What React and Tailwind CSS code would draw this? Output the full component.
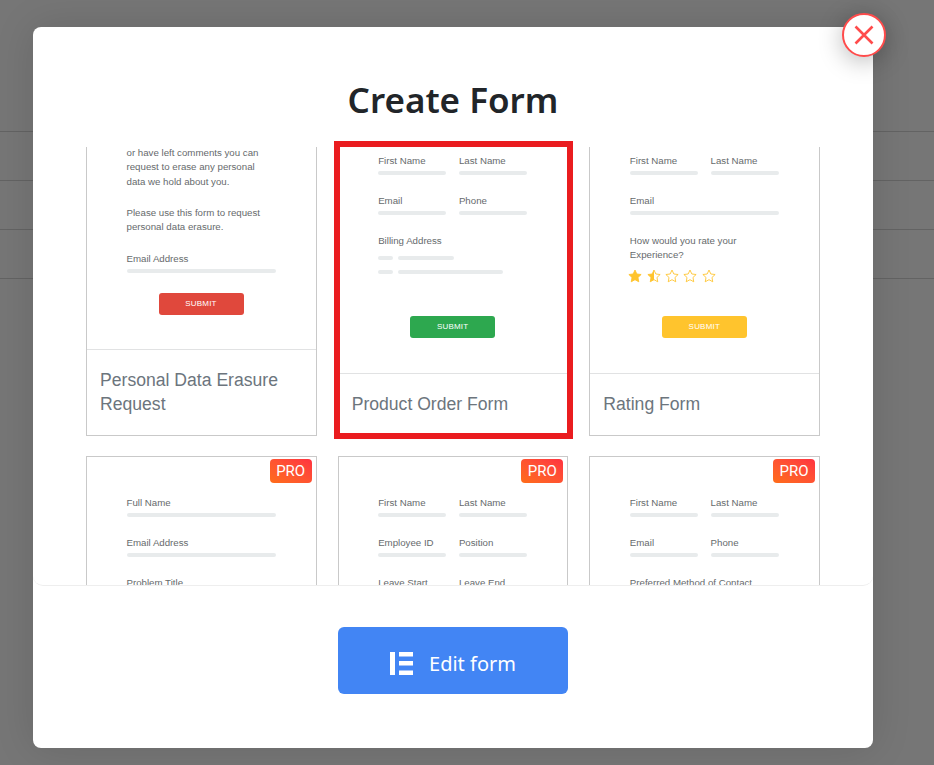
import React from "react";

const Label = ({ children }) => (
  <div className="h-[14px] whitespace-nowrap text-[9.7px] leading-[14px] text-[#666a6c]">{children}</div>
);
const Bar = ({ className = "w-full" }) => <div className={`h-[4px] rounded-full bg-[#e8ebec] ${className}`} />;
const Field = ({ label, className = "w-[68.5px]" }) => (
  <div className={`${className} mb-[19px]`}>
    <Label>{label}</Label>
    <Bar className="mt-[3px] w-full" />
  </div>
);
const Pair = ({ a, b }) => (
  <div className="flex gap-[12.5px]">
    <Field label={a} />
    <Field label={b} />
  </div>
);
const Submit = ({ className, mt }) => (
  <div className={`ml-[32px] flex h-[22px] w-[85px] items-center justify-center rounded-[3px] text-[8px] font-medium tracking-[0.2px] text-white ${className} ${mt}`}>
    SUBMIT
  </div>
);
const Pro = () => (
  <div className="absolute right-[4px] top-[2px] flex h-[24px] w-[42px] items-center justify-center rounded-[4px] bg-gradient-to-tr from-[#ff6c17] to-[#ff3140] font-['Roboto',sans-serif] text-[15px] text-white">
    PRO
  </div>
);
const Card = ({ title, pro, imageH, children, pad = "pt-[39px]" }) => (
  <div className="relative flex h-[322px] flex-col border border-[#c9c9c9] bg-white">
    {pro && <Pro />}
    <div className={`${imageH} ${pad} shrink-0 px-[39.5px]`}>
      <div className="w-[149px]">{children}</div>
    </div>
    <div className="flex-1 border-t border-[#e1e2e3] px-[13px] pt-[18px] text-[17.6px] leading-[24px] text-[#6c757d]">
      {title}
    </div>
  </div>
);
const starPath = "M8 1.2l2.1 4.5 4.9.6-3.6 3.4.9 4.9L8 12.2l-4.3 2.4.9-4.9L1 6.3l4.9-.6z";
const Star = ({ fill }) => (
  <svg viewBox="0 0 16 16" className="h-[14px] w-[14px]">
    {fill === "half" && <path d="M8 1.2v11L3.7 14.6l.9-4.9L1 6.3l4.9-.6z" fill="#ffc42d" />}
    <path d={starPath} fill={fill === "full" ? "#ffc42d" : "none"} stroke="#ffc42d" strokeWidth="1" strokeLinejoin="round" />
  </svg>
);

export default function App() {
  return (
    <div className="relative h-[765px] w-[934px] overflow-hidden bg-[#767676] font-['Liberation_Sans',sans-serif]">
      <div className="pt-[131px]">
        {[0, 1, 2, 3].map((i) => (
          <div key={i} className="h-[49px] border-t border-[#636363]" />
        ))}
      </div>

      <div className="absolute left-[33px] top-[27px] flex h-[721px] w-[840px] flex-col rounded-[8px] bg-white shadow-[0_0_40px_rgba(0,0,0,0.12)]">
        <button className="absolute -right-[13px] -top-[14px] z-10 flex h-[44px] w-[44px] items-center justify-center rounded-full border-2 border-[#ff4b4b] bg-white shadow-[0_4px_24px_rgba(0,0,0,0.28)]">
          <svg viewBox="0 0 20 20" className="h-[20px] w-[20px]">
            <path d="M1.5 1.5l17 17M18.5 1.5l-17 17" stroke="#ff4b4b" strokeWidth="2.6" fill="none" />
          </svg>
        </button>

        <div className="flex h-[120px] shrink-0 items-start justify-center pt-[46px] font-['Noto_Sans',sans-serif] text-[35px] font-semibold leading-[54px] text-[#212529]">
          Create Form
        </div>

        <div className="relative h-[439px] shrink-0">
          <div className="h-[439px] overflow-hidden rounded-b-[10px] border-b border-[#eeeeee] px-[53px]">
            <div className="-mt-[33px] grid w-[734px] grid-cols-3 gap-x-[21px] gap-y-[20px]">
              <Card title="Personal Data Erasure Request" imageH="h-[234px]" pad="pt-[30.75px]">
                <div className="text-[9.7px] leading-[14.5px] text-[#666a6c]">
                  or have left comments you can
                  <br />
                  request to erase any personal
                  <br />
                  data we hold about you.
                </div>
                <div className="mt-[16.5px] text-[9.7px] leading-[14.5px] text-[#666a6c]">
                  Please use this form to request
                  <br />
                  personal data erasure.
                </div>
                <div className="mt-[17px]">
                  <Label>Email Address</Label>
                  <Bar className="mt-[3px]" />
                </div>
                <Submit className="bg-[#e0483c]" mt="mt-[20px]" />
              </Card>

              <Card title="Product Order Form" imageH="h-[258px]">
                <Pair a="First Name" b="Last Name" />
                <Pair a="Email" b="Phone" />
                <Label>Billing Address</Label>
                <div className="mt-[8px] flex gap-[5px]">
                  <Bar className="w-[15px]" />
                  <Bar className="w-[56px]" />
                </div>
                <div className="mt-[10px] flex gap-[5px]">
                  <Bar className="w-[15px]" />
                  <Bar className="w-[105px]" />
                </div>
                <Submit className="bg-[#2da84f]" mt="mt-[42px]" />
              </Card>

              <Card title="Rating Form" imageH="h-[258px]">
                <Pair a="First Name" b="Last Name" />
                <Field label="Email" className="w-full" />
                <div className="text-[9.7px] leading-[14px] text-[#666a6c]">
                  How would you rate your
                  <br />
                  Experience?
                </div>
                <div className="mt-[7px] -ml-[1.5px] flex gap-[4.3px]">
                  <Star fill="full" />
                  <Star fill="half" />
                  <Star />
                  <Star />
                  <Star />
                </div>
                <Submit className="bg-[#ffc42d]" mt="mt-[33px]" />
              </Card>

              <Card title="Support Request Form" pro imageH="h-[258px]">
                <Field label="Full Name" className="w-full" />
                <Field label="Email Address" className="w-full" />
                <Label>Problem Title</Label>
              </Card>
              <Card title="Leave Request Form" pro imageH="h-[258px]">
                <Pair a="First Name" b="Last Name" />
                <Pair a="Employee ID" b="Position" />
                <Pair a="Leave Start" b="Leave End" />
              </Card>
              <Card title="Contact Form" pro imageH="h-[258px]">
                <Pair a="First Name" b="Last Name" />
                <Pair a="Email" b="Phone" />
                <Label>Preferred Method of Contact</Label>
              </Card>
            </div>
          </div>
          <div className="absolute left-[301px] -top-[6px] h-[298px] w-[239px] border-[6px] border-[#ea1c1f]" />
        </div>

        <div className="flex flex-1 items-start justify-center pt-[41px]">
          <button className="flex h-[67px] w-[230px] items-center justify-center gap-[16px] rounded-[6px] bg-[#4285f4] pt-[6px] font-['Noto_Sans',sans-serif] text-[20px] text-white">
            <svg viewBox="0 0 23 23" className="h-[23px] w-[23px]" fill="#fff">
              <rect x="0" y="0" width="5" height="23" />
              <rect x="9" y="0" width="14" height="4.5" />
              <rect x="9" y="9" width="14" height="4.5" />
              <rect x="9" y="18.5" width="14" height="4.5" />
            </svg>
            Edit form
          </button>
        </div>
      </div>
    </div>
  );
}
